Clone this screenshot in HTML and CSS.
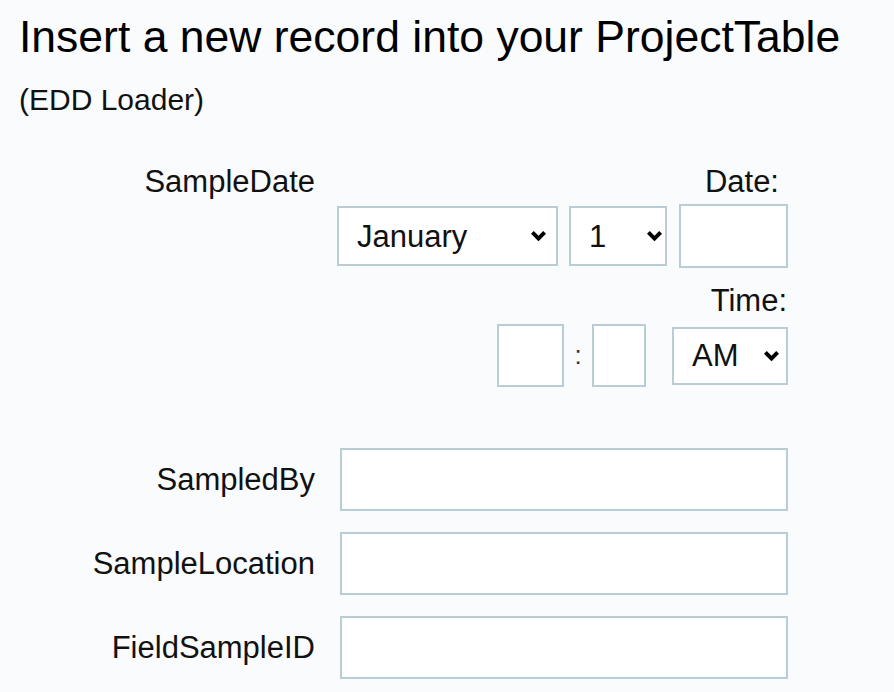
FILE: index.html
```html
<!DOCTYPE html>
<html>
<head>
<meta charset="utf-8">
<link rel="stylesheet" href="styles.css">
</head>
<body>
<div class="page">
  <h1 class="title">Insert a new record into your ProjectTable</h1>
  <p class="subtitle">(EDD Loader)</p>
  <form class="form">
    <div class="row row-date">
      <div class="label">SampleDate</div>
      <div class="field">
        <div class="sublabel date-label">Date:</div>
        <div class="date-line">
          <div class="select-wrap sel-month">
            <select class="select"><option>January</option></select>
            <svg class="chev" viewBox="0 0 15 10" width="15" height="10"><polygon points="0,2.8 2.8,0 7.5,4.7 12.2,0 15,2.8 7.5,10.3" fill="#000"/></svg>
          </div>
          <div class="select-wrap sel-day">
            <select class="select"><option>1</option></select>
            <svg class="chev" viewBox="0 0 15 10" width="15" height="10"><polygon points="0,2.8 2.8,0 7.5,4.7 12.2,0 15,2.8 7.5,10.3" fill="#000"/></svg>
          </div>
          <input class="box year" type="text">
        </div>
        <div class="sublabel time-label">Time:</div>
        <div class="time-line">
          <input class="box hour" type="text">
          <span class="colon">:</span>
          <input class="box minute" type="text">
          <div class="select-wrap sel-ampm">
            <select class="select"><option>AM</option></select>
            <svg class="chev" viewBox="0 0 15 10" width="15" height="10"><polygon points="0,2.8 2.8,0 7.5,4.7 12.2,0 15,2.8 7.5,10.3" fill="#000"/></svg>
          </div>
        </div>
      </div>
    </div>
    <div class="row row-text first-text">
      <div class="label">SampledBy</div>
      <div class="field"><input class="box wide" type="text"></div>
    </div>
    <div class="row row-text">
      <div class="label">SampleLocation</div>
      <div class="field"><input class="box wide" type="text"></div>
    </div>
    <div class="row row-text">
      <div class="label">FieldSampleID</div>
      <div class="field"><input class="box wide" type="text"></div>
    </div>
  </form>
</div>
</body>
</html>
```
FILE: styles.css
```css
html, body {
  margin: 0;
  padding: 0;
  background: #f9fbfd;
}
body {
  font-family: "Liberation Sans", Arial, Helvetica, sans-serif;
  color: #111;
}
.page {
  padding: 11px 0 0 19px;
}
.title {
  margin: 0;
  font-size: 44.5px;
  line-height: 52px;
  font-weight: normal;
  color: #000;
}
.subtitle {
  margin: 19px 0 0 0;
  font-size: 30px;
  line-height: 36px;
  color: #111;
}
.form {
  margin-top: 46px;
}
.row {
  display: grid;
  grid-template-columns: 296px 451px;
  column-gap: 22px;
}
.row-date {
  align-items: start;
}
.row-text {
  align-items: center;
  margin-top: 21px;
}
.row-text.first-text {
  margin-top: 61px;
}
.label {
  text-align: right;
  font-size: 31px;
  line-height: 36px;
}
.field {
  display: flex;
  flex-direction: column;
}
.sublabel {
  text-align: right;
  font-size: 31px;
  line-height: 36px;
}
.date-label {
  padding-right: 9px;
}
.time-label {
  margin-top: 15px;
  padding-right: 1px;
}
.date-line {
  display: flex;
  align-items: center;
  gap: 11px;
  margin-top: 4px;
}
.time-line {
  display: flex;
  align-items: center;
  justify-content: flex-end;
  margin-top: 5px;
}
.box {
  box-sizing: border-box;
  border: 2px solid #b9cdd6;
  background: #fff;
  margin: 0;
  padding: 0 10px;
  font-family: inherit;
  font-size: 31px;
  border-radius: 0;
  outline: none;
}
.year {
  width: 109px;
  height: 64px;
  margin-left: 1px;
}
.hour {
  width: 67px;
  height: 63px;
}
.minute {
  width: 54px;
  height: 63px;
}
.colon {
  width: 28px;
  text-align: center;
  font-size: 26px;
  color: #333;
}
.wide {
  width: 448px;
  height: 63px;
  margin-left: 3px;
}
.select-wrap {
  position: relative;
}
select.select {
  -webkit-appearance: none;
  -moz-appearance: none;
  appearance: none;
  background-image: none;
  box-sizing: border-box;
  width: 100%;
  border: 2px solid #b9cdd6;
  background-color: #fff;
  border-radius: 0;
  margin: 0;
  padding: 0 30px 0 18px;
  font-family: inherit;
  font-size: 31px;
  color: #111;
  outline: none;
  display: block;
}
.chev {
  position: absolute;
  z-index: 2;
  top: 50%;
  margin-top: -5px;
  pointer-events: none;
  display: block;
}
.sel-month {
  width: 221px;
}
.sel-month .chev {
  right: 12px;
}
.sel-month .select,
.sel-day .select {
  height: 60px;
}
.sel-day {
  width: 98px;
}
.sel-day .chev {
  right: 5px;
}
.sel-ampm {
  width: 116px;
  margin-left: 26px;
}
.sel-ampm .chev {
  right: 9px;
}
.sel-ampm .select {
  height: 58px;
}
```
